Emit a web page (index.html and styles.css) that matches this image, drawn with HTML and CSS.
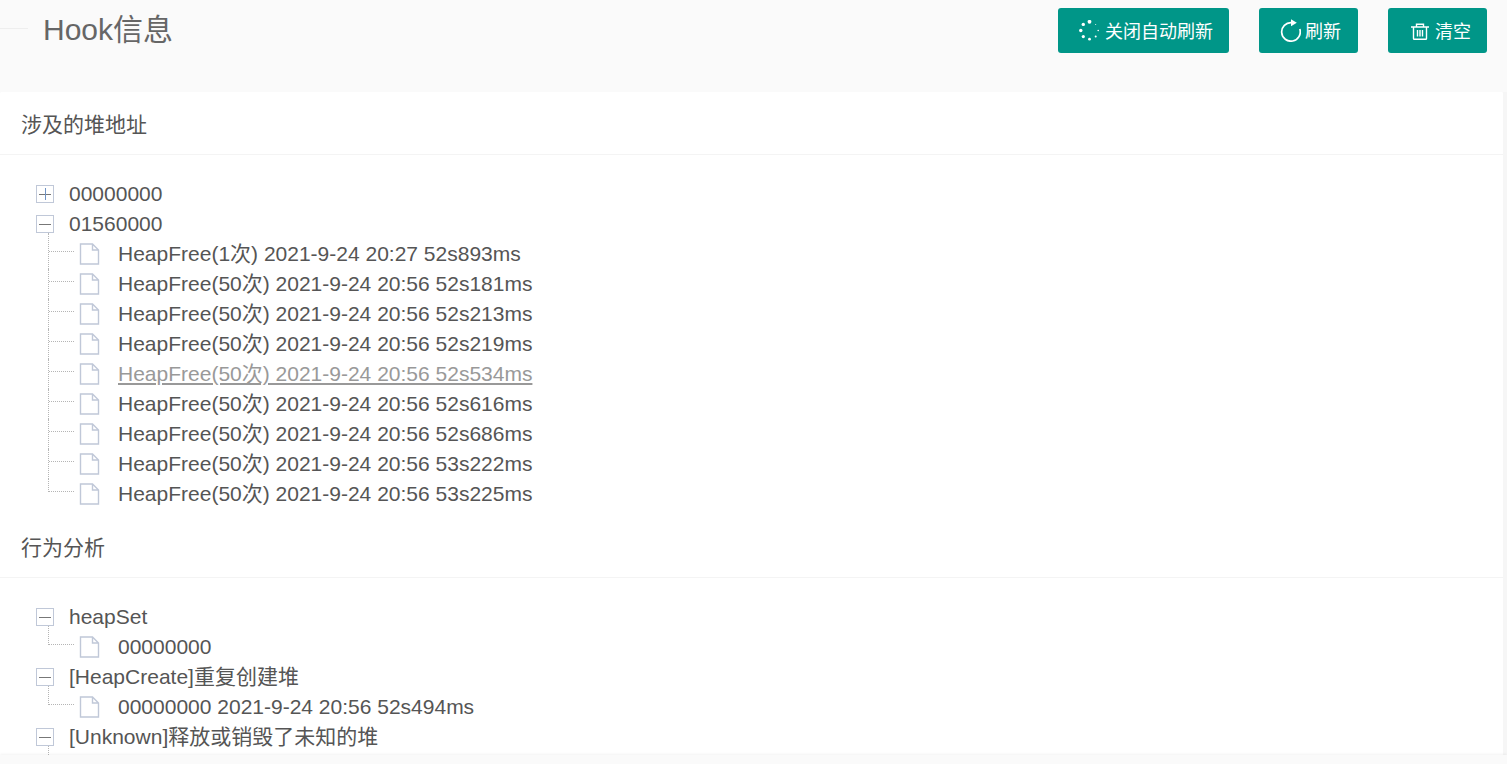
FILE: index.html
```html
<!DOCTYPE html>
<html lang="zh-CN">
<head>
<meta charset="utf-8">
<title>Hook信息</title>
<link rel="stylesheet" href="styles.css">
</head>
<body>
<div class="page">
  <header class="header">
    <span class="header-rule"></span>
    <h1 class="title">Hook信息</h1>
    <div class="actions">
      <button class="btn btn-auto" type="button">
        <svg class="btn-icon" viewBox="0 0 21 21" width="21" height="21"><g fill="#fff"><circle cx="10.500" cy="1.800" r="1.900"/><circle cx="4.300" cy="4.400" r="1.700"/><circle cx="1.800" cy="10.500" r="1.700"/><circle cx="4.300" cy="16.600" r="1.600"/><circle cx="10.500" cy="19.200" r="1.400"/><circle cx="16.700" cy="16.600" r="1"/><circle cx="19.200" cy="10.500" r=".8"/><circle cx="16.700" cy="4.400" r=".5"/></g></svg>
        <span class="btn-text">关闭自动刷新</span>
      </button>
      <button class="btn btn-refresh" type="button">
        <svg class="btn-icon" viewBox="0 0 21 23" width="21" height="23"><path d="M11.500 3.600A9.300 9.300 0 1 0 19.800 10" fill="none" stroke="#fff" stroke-width="1.700"/><path d="M11 .2l5.800 3.600-5.800 3.400z" fill="#fff"/></svg>
        <span class="btn-text">刷新</span>
      </button>
      <button class="btn btn-clear" type="button">
        <svg class="btn-icon" viewBox="0 0 18 17" width="18" height="17"><path d="M0 4h18M5.500 3.600V1.200h7v2.400M2.500 4v11.400q0 .8.8.8h11.400q.8 0 .8-.8V4M6.500 7v6.500M9 7v6.500M11.500 7v6.500" fill="none" stroke="#fff" stroke-width="1.400"/></svg>
        <span class="btn-text">清空</span>
      </button>
    </div>
  </header>

  <div class="content">
    <main class="card">
      <section>
        <h2 class="panel-title">涉及的堆地址</h2>
        <div class="tree">
          <div class="row"><span class="toggle toggle-plus"></span><span class="label">00000000</span></div>
          <div class="row"><span class="toggle toggle-minus"></span><span class="label">01560000</span></div>
          <ul class="children">
            <li class="leaf"><span class="conn"><span class="conn-line"></span></span><svg class="file" viewBox="0 0 21 22" width="21" height="22"><path d="M1.500 1h12l6 6v14h-18zM13.500 1v6h6" fill="#fff" stroke="#c0c8d8" stroke-width="1.400"/></svg><span class="leaf-text">HeapFree(1次) 2021-9-24 20:27 52s893ms</span></li>
            <li class="leaf"><span class="conn"><span class="conn-line"></span></span><svg class="file" viewBox="0 0 21 22" width="21" height="22"><path d="M1.500 1h12l6 6v14h-18zM13.500 1v6h6" fill="#fff" stroke="#c0c8d8" stroke-width="1.400"/></svg><span class="leaf-text">HeapFree(50次) 2021-9-24 20:56 52s181ms</span></li>
            <li class="leaf"><span class="conn"><span class="conn-line"></span></span><svg class="file" viewBox="0 0 21 22" width="21" height="22"><path d="M1.500 1h12l6 6v14h-18zM13.500 1v6h6" fill="#fff" stroke="#c0c8d8" stroke-width="1.400"/></svg><span class="leaf-text">HeapFree(50次) 2021-9-24 20:56 52s213ms</span></li>
            <li class="leaf"><span class="conn"><span class="conn-line"></span></span><svg class="file" viewBox="0 0 21 22" width="21" height="22"><path d="M1.500 1h12l6 6v14h-18zM13.500 1v6h6" fill="#fff" stroke="#c0c8d8" stroke-width="1.400"/></svg><span class="leaf-text">HeapFree(50次) 2021-9-24 20:56 52s219ms</span></li>
            <li class="leaf"><span class="conn"><span class="conn-line"></span></span><svg class="file" viewBox="0 0 21 22" width="21" height="22"><path d="M1.500 1h12l6 6v14h-18zM13.500 1v6h6" fill="#fff" stroke="#c0c8d8" stroke-width="1.400"/></svg><span class="leaf-text leaf-hover">HeapFree(50次) 2021-9-24 20:56 52s534ms</span></li>
            <li class="leaf"><span class="conn"><span class="conn-line"></span></span><svg class="file" viewBox="0 0 21 22" width="21" height="22"><path d="M1.500 1h12l6 6v14h-18zM13.500 1v6h6" fill="#fff" stroke="#c0c8d8" stroke-width="1.400"/></svg><span class="leaf-text">HeapFree(50次) 2021-9-24 20:56 52s616ms</span></li>
            <li class="leaf"><span class="conn"><span class="conn-line"></span></span><svg class="file" viewBox="0 0 21 22" width="21" height="22"><path d="M1.500 1h12l6 6v14h-18zM13.500 1v6h6" fill="#fff" stroke="#c0c8d8" stroke-width="1.400"/></svg><span class="leaf-text">HeapFree(50次) 2021-9-24 20:56 52s686ms</span></li>
            <li class="leaf"><span class="conn"><span class="conn-line"></span></span><svg class="file" viewBox="0 0 21 22" width="21" height="22"><path d="M1.500 1h12l6 6v14h-18zM13.500 1v6h6" fill="#fff" stroke="#c0c8d8" stroke-width="1.400"/></svg><span class="leaf-text">HeapFree(50次) 2021-9-24 20:56 53s222ms</span></li>
            <li class="leaf leaf-last"><span class="conn"><span class="conn-line"></span></span><svg class="file" viewBox="0 0 21 22" width="21" height="22"><path d="M1.500 1h12l6 6v14h-18zM13.500 1v6h6" fill="#fff" stroke="#c0c8d8" stroke-width="1.400"/></svg><span class="leaf-text">HeapFree(50次) 2021-9-24 20:56 53s225ms</span></li>
          </ul>
        </div>
      </section>
      <section>
        <h2 class="panel-title">行为分析</h2>
        <div class="tree">
          <div class="row"><span class="toggle toggle-minus"></span><span class="label">heapSet</span></div>
          <ul class="children">
            <li class="leaf leaf-last"><span class="conn"><span class="conn-line"></span></span><svg class="file" viewBox="0 0 21 22" width="21" height="22"><path d="M1.500 1h12l6 6v14h-18zM13.500 1v6h6" fill="#fff" stroke="#c0c8d8" stroke-width="1.400"/></svg><span class="leaf-text">00000000</span></li>
          </ul>
          <div class="row"><span class="toggle toggle-minus"></span><span class="label">[HeapCreate]重复创建堆</span></div>
          <ul class="children">
            <li class="leaf leaf-last"><span class="conn"><span class="conn-line"></span></span><svg class="file" viewBox="0 0 21 22" width="21" height="22"><path d="M1.500 1h12l6 6v14h-18zM13.500 1v6h6" fill="#fff" stroke="#c0c8d8" stroke-width="1.400"/></svg><span class="leaf-text">00000000 2021-9-24 20:56 52s494ms</span></li>
          </ul>
          <div class="row"><span class="toggle toggle-minus"></span><span class="label">[Unknown]释放或销毁了未知的堆</span></div>
          <ul class="children">
            <li class="leaf leaf-last"><span class="conn"><span class="conn-line"></span></span><svg class="file" viewBox="0 0 21 22" width="21" height="22"><path d="M1.500 1h12l6 6v14h-18zM13.500 1v6h6" fill="#fff" stroke="#c0c8d8" stroke-width="1.400"/></svg></li>
          </ul>
        </div>
      </section>
    </main>
    <div class="scroll-track"></div>
  </div>
  <footer class="footer"></footer>
</div>
</body>
</html>
```

FILE: styles.css
```css
* { box-sizing: border-box; }
html, body { margin: 0; height: 100%; overflow: hidden; }
body {
  background: #fafafa;
  color: #555;
  font-family: "Liberation Sans", "Noto Sans CJK SC", sans-serif;
}
.page { height: 764px; display: flex; flex-direction: column; }
.header {
  height: 92px;
  flex: none;
  display: flex;
  align-items: flex-start;
  background: #fafafa;
  padding-right: 20px;
}
.header-rule {
  width: 28px;
  margin: 28px 15px 0 0;
  border-top: 1px solid #eee;
}
.title {
  margin: 12px 0 0;
  font-size: 30px;
  line-height: 36px;
  font-weight: 400;
  color: #666;
}
.actions { margin-left: auto; margin-top: 8px; display: flex; gap: 30px; }
.btn {
  height: 45px;
  display: flex;
  align-items: center;
  border: 0;
  border-radius: 3px;
  background: #009688;
  color: #fff;
  font: inherit;
  font-size: 18px;
  line-height: 24px;
  padding: 0 16px 0 21px;
}
.btn-text { margin-top: 2px; }
.btn-auto .btn-icon { margin-right: 5px; }
.btn-refresh { padding-right: 17px; }
.btn-refresh .btn-icon { margin-right: 4px; }
.btn-clear { padding-left: 23px; }
.btn-clear .btn-icon { margin: 2px 6px 0 0; }
.content { flex: 1; min-height: 0; display: flex; }
.card {
  flex: 1;
  min-width: 0;
  overflow: hidden;
  background: #fff;
  border-radius: 2px 2px 0 0;
}
.scroll-track { width: 4px; background: #f6f6f6; }
.footer {
  height: 9px;
  flex: none;
  background: #fafafa;
  box-shadow: 0 -1px 3px rgba(0, 0, 0, .05);
  position: relative;
}
.panel-title {
  margin: 0;
  height: 63px;
  padding: 4px 21px 0;
  display: flex;
  align-items: center;
  border-bottom: 1px solid #f4f4f4;
  font-size: 21px;
  line-height: 30px;
  font-weight: 400;
  color: #555;
}
.tree { padding: 24px 0 6px 36px; font-size: 21px; }
.row, .leaf { height: 30px; display: flex; align-items: center; }
.label { line-height: 30px; }
.toggle {
  width: 18px;
  height: 18px;
  flex: none;
  margin-right: 15px;
  border: 1px solid #c0c8d8;
  display: flex;
  align-items: center;
  justify-content: center;
  position: relative;
}
.toggle::before {
  content: "";
  width: 12px;
  height: 1px;
  background: #777;
}
.toggle-plus::after {
  content: "";
  position: absolute;
  left: 8px;
  top: 2px;
  width: 1px;
  height: 12px;
  background: #6f93c4;
}
.children {
  list-style: none;
  margin: 0 0 0 12px;
  padding: 0;
}
.leaf { align-items: flex-start; }
.conn {
  width: 31px;
  height: 100%;
  flex: none;
  border-left: 1px dotted #b5b5b5;
}
.leaf:first-child .conn { height: 36px; margin-top: -6px; padding-top: 6px; }
.conn-line {
  display: block;
  width: 25px;
  height: 13px;
  border-bottom: 1px dotted #b5b5b5;
}
.leaf-last .conn { height: 13px; }
.leaf-last:first-child .conn { height: 19px; }
.file { flex: none; margin-top: 4px; }
.leaf-text { margin-left: 18px; line-height: 30px; }
.leaf-hover { color: #999; text-decoration: underline; }
```
